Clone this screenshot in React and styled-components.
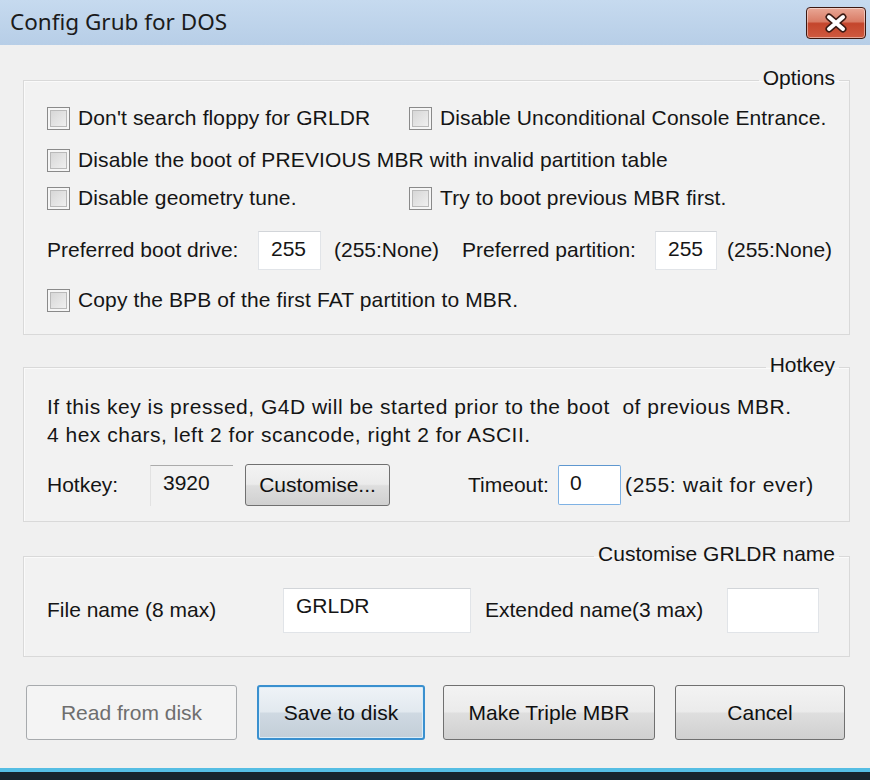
import React from "react";
import styled, { createGlobalStyle, css } from "styled-components";

const Global = createGlobalStyle`
  html, body {
    margin: 0;
    padding: 0;
    background: #f0f0f0;
  }
  body {
    font-family: "Liberation Sans", Arial, sans-serif;
    color: #151515;
  }
`;

const Window = styled.div`
  width: 870px;
  height: 780px;
  display: flex;
  flex-direction: column;
  overflow: hidden;
  background: #f0f0f0;
`;

const TitleBar = styled.div`
  height: 45px;
  flex: none;
  display: flex;
  align-items: center;
  justify-content: space-between;
  padding: 0 4px 0 10px;
  background: linear-gradient(#c6daef, #b7cee7);
`;

const Title = styled.div`
  font-family: "Noto Sans", "Open Sans", sans-serif;
  font-size: 22.5px;
  color: #1b1b1b;
  margin-top: -2px;
`;

const CloseButton = styled.div`
  width: 60px;
  height: 32px;
  box-sizing: border-box;
  display: flex;
  align-items: center;
  justify-content: center;
  border: 1px solid #3c1811;
  border-radius: 4px;
  background: linear-gradient(#e9a795 0%, #d97c66 45%, #c4452c 52%, #cf5a40 100%);
  box-shadow: inset 0 0 0 1px rgba(255, 255, 255, 0.45);
`;

const Body = styled.div`
  flex: 1;
  display: flex;
  flex-direction: column;
  padding: 24px 20px 0 23px;
`;

const Group = styled.fieldset`
  margin: ${(p) => p.$top || 0}px 0 0 0;
  padding: ${(p) => p.$pt}px 10px ${(p) => p.$pb}px 23px;
  min-width: 0;
  border: 1px solid #d9d9d9;
  box-shadow: inset 1px 1px 0 #fafafa;
  background: #f2f2f2;
`;

const Legend = styled.legend`
  margin-left: auto;
  padding: 0 4px;
  font-size: 21px;
  line-height: 22px;
  color: #141414;
  position: relative;
  top: -2px;
`;

const OptionGrid = styled.div`
  display: grid;
  grid-template-columns: 362px 1fr;
  grid-template-rows: 42px 42px 34px 70px 30px;
  align-items: center;
`;

const Wide = styled.div`
  grid-column: 1 / 3;
  display: flex;
  align-items: center;
`;

const CheckRow = styled.label`
  display: flex;
  align-items: center;
  gap: 8px;
  font-size: 21px;
  letter-spacing: 0.12px;
  white-space: nowrap;
`;

const Box = styled.span`
  width: 23px;
  height: 23px;
  box-sizing: border-box;
  flex: none;
  border: 1px solid #8a8a8a;
  background: linear-gradient(135deg, #d2d2d2, #f4f4f4);
  box-shadow: inset 0 0 0 2px #f6f6f6, inset 0 0 0 3px #b9b9b9;
`;

const Text = styled.span`
  font-size: 21px;
  white-space: nowrap;
  letter-spacing: ${(p) => p.$ls || 0}px;
  width: ${(p) => (p.$w ? `${p.$w}px` : "auto")};
  margin-right: ${(p) => p.$mr || 0}px;
  flex: none;
`;

const Input = styled.div`
  width: ${(p) => p.$w}px;
  height: ${(p) => p.$h}px;
  box-sizing: border-box;
  flex: none;
  margin-right: ${(p) => p.$mr || 0}px;
  padding: 3px 0 0 ${(p) => p.$pl || 12}px;
  background: #fff;
  border: 1px solid ${(p) => (p.$focus ? "#7fb2e4" : "#e1e4e8")};
  border-top-color: ${(p) => (p.$focus ? "#5e97cf" : "#d2d5d9")};
  border-radius: ${(p) => (p.$focus ? 2 : 0)}px;
  font-size: 21px;
  line-height: 28px;
`;

const Static = styled.div`
  width: 83px;
  height: 41px;
  box-sizing: border-box;
  flex: none;
  margin-right: 12px;
  padding: 3px 0 0 12px;
  border-top: 1px solid #ababab;
  border-left: 1px solid #e2e2e2;
  font-size: 21px;
  line-height: 28px;
`;

const HotkeyGrid = styled.div`
  display: grid;
  grid-template-rows: 28px 28px 72px;
  align-items: center;
`;

const Line = styled.div`
  font-size: 21px;
  letter-spacing: 0.5px;
  white-space: pre;
`;

const Row = styled.div`
  display: flex;
  align-items: center;
  height: ${(p) => p.$h}px;
`;

const buttonLook = {
  normal: css`
    border: 1px solid #707070;
    background: linear-gradient(#f3f3f3 0%, #ebebeb 48%, #dedede 52%, #d0d0d0 100%);
    color: #101010;
  `,
  focus: css`
    border: 2px solid #3a90cf;
    background: linear-gradient(#eef3f7 0%, #e2e9ef 48%, #cfd9e2 52%, #c3ced8 100%);
    box-shadow: inset 0 0 0 1px #d9ecf8;
    color: #101010;
  `,
  disabled: css`
    border: 1px solid #a7aaad;
    background: #f4f4f4;
    color: #6e6e6e;
  `,
};

const Button = styled.button`
  width: ${(p) => p.$w}px;
  height: ${(p) => p.$h || 55}px;
  box-sizing: border-box;
  flex: none;
  margin-right: ${(p) => p.$mr || 0}px;
  padding: 0;
  border-radius: 3px;
  font-family: "Liberation Sans", Arial, sans-serif;
  font-size: 21px;
  ${(p) => buttonLook[p.$kind || "normal"]}
`;

const ButtonBar = styled.div`
  display: flex;
  align-items: center;
  margin: 28px 0 0 3px;
`;

const BottomEdge = styled.div`
  height: 12px;
  flex: none;
  border-top: 4px solid #55bde3;
  background: #16232c;
  box-sizing: border-box;
`;

function Check({ children }) {
  return (
    <CheckRow>
      <Box />
      <span>{children}</span>
    </CheckRow>
  );
}

export default function App() {
  return (
    <Window>
      <Global />
      <TitleBar>
        <Title>Config Grub for DOS</Title>
        <CloseButton>
          <svg width="26" height="20" viewBox="0 0 26 20">
            <path d="M6 4 L20 16 M20 4 L6 16" stroke="#3a1a14" strokeWidth="7" strokeLinecap="round" />
            <path d="M6 4 L20 16 M20 4 L6 16" stroke="#ffffff" strokeWidth="4" strokeLinecap="round" />
          </svg>
        </CloseButton>
      </TitleBar>
      <Body>
        <Group $pt={6} $pb={19}>
          <Legend>Options</Legend>
          <OptionGrid>
            <Check>Don't search floppy for GRLDR</Check>
            <Check>Disable Unconditional Console Entrance.</Check>
            <Wide>
              <Check>Disable the boot of PREVIOUS MBR with invalid partition table</Check>
            </Wide>
            <Check>Disable geometry tune.</Check>
            <Check>Try to boot previous MBR first.</Check>
            <Wide>
              <Text $w={211}>Preferred boot drive:</Text>
              <Input $w={63} $h={39} $mr={13}>255</Input>
              <Text $w={128}>(255:None)</Text>
              <Text $w={193}>Preferred partition:</Text>
              <Input $w={62} $h={39} $mr={10}>255</Input>
              <Text>(255:None)</Text>
            </Wide>
            <Wide>
              <Check>Copy the BPB of the first FAT partition to MBR.</Check>
            </Wide>
          </OptionGrid>
        </Group>

        <Group $top={21} $pt={15} $pb={0}>
          <Legend>Hotkey</Legend>
          <HotkeyGrid>
            <Line>If this key is pressed, G4D will be started prior to the boot  of previous MBR.</Line>
            <Line>4 hex chars, left 2 for scancode, right 2 for ASCII.</Line>
            <Row $h={72}>
              <Text $w={103}>Hotkey:</Text>
              <Static>3920</Static>
              <Button $w={145} $h={42} $mr={78}>Customise...</Button>
              <Text $w={90}>Timeout:</Text>
              <Input $w={63} $h={40} $mr={4} $pl={11} $focus>0</Input>
              <Text $ls={0.7}>(255: wait for ever)</Text>
            </Row>
          </HotkeyGrid>
        </Group>

        <Group $top={23} $pt={13} $pb={16}>
          <Legend>Customise GRLDR name</Legend>
          <Row $h={60}>
            <Text $w={236}>File name (8 max)</Text>
            <Input $w={188} $h={45} $mr={14}>GRLDR</Input>
            <Text $w={242}>Extended name(3 max)</Text>
            <Input $w={92} $h={45} />
          </Row>
        </Group>

        <ButtonBar>
          <Button $w={211} $mr={20} $kind="disabled">Read from disk</Button>
          <Button $w={168} $mr={18} $kind="focus">Save to disk</Button>
          <Button $w={212} $mr={20}>Make Triple MBR</Button>
          <Button $w={170}>Cancel</Button>
        </ButtonBar>
      </Body>
      <BottomEdge />
    </Window>
  );
}
